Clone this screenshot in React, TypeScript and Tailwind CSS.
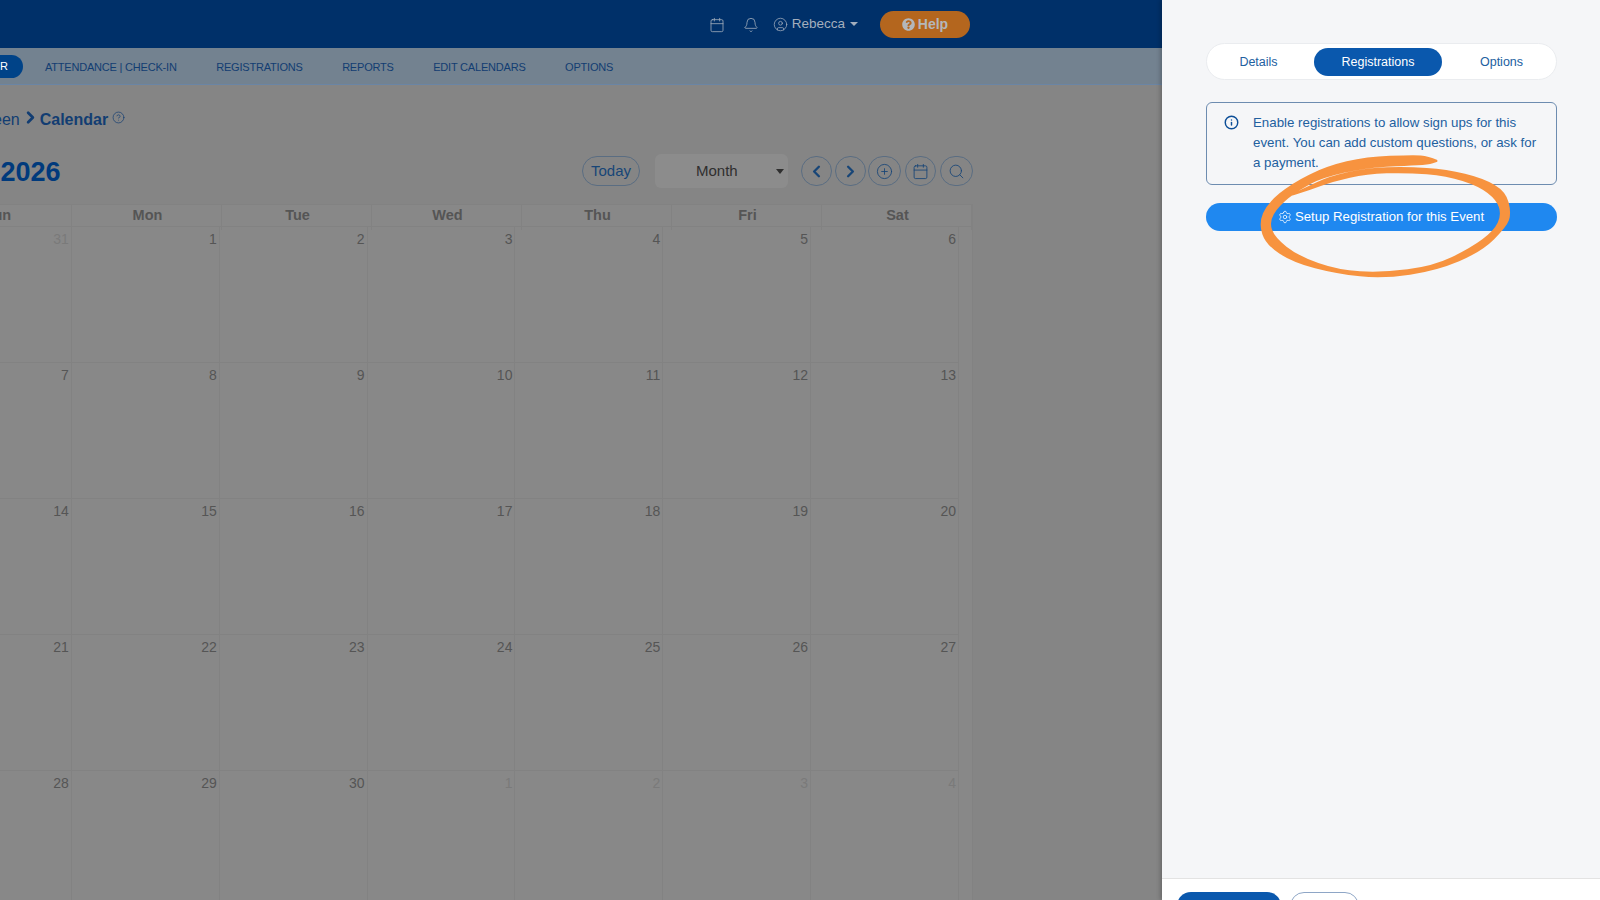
import React from "react";
import { Bell, Calendar, ChevronLeft, ChevronRight, CircleHelp, CirclePlus, CircleUser, Info, Search, Settings } from "lucide-react";
import { FaQuestionCircle } from "react-icons/fa";

const days = [
  [31, 1, 2, 3, 4, 5, 6],
  [7, 8, 9, 10, 11, 12, 13],
  [14, 15, 16, 17, 18, 19, 20],
  [21, 22, 23, 24, 25, 26, 27],
  [28, 29, 30, 1, 2, 3, 4],
];
const weekdays = ["Sun", "Mon", "Tue", "Wed", "Thu", "Fri", "Sat"];
const navItems = ["ATTENDANCE | CHECK-IN", "REGISTRATIONS", "REPORTS", "EDIT CALENDARS", "OPTIONS"];

// hand drawn ring, traced from the screenshot (units are 1/3 px)
const ring: number[][] = [
  [772, 420], [745, 408], [700, 405], [560, 410], [440, 438], [335, 490], [262, 550], [236, 610], [258, 675], [340, 728], [470, 762],
  [610, 776], [770, 752], [905, 695], [980, 620], [994, 580], [978, 515], [910, 475], [800, 448], [680, 440], [560, 444],
  [450, 468], [370, 505], [310, 535], [385, 512], [460, 484], [560, 462], [680, 458], [800, 468], [895, 498], [950, 540],
  [964, 585], [942, 632], [872, 684], [760, 738], [605, 758], [475, 750], [355, 708], [284, 652], [268, 605], [295, 560],
  [355, 510], [430, 472], [560, 443], [680, 437], [745, 434], [772, 425],
];

function smooth(pts: number[][]) {
  let d = `M${pts[0][0]} ${pts[0][1]}`;
  for (let i = 1; i < pts.length - 1; i++) {
    const mx = (pts[i][0] + pts[i + 1][0]) / 2;
    const my = (pts[i][1] + pts[i + 1][1]) / 2;
    d += `Q${pts[i][0]} ${pts[i][1]} ${mx} ${my}`;
  }
  return d + `L${pts[pts.length - 1][0]} ${pts[pts.length - 1][1]}Z`;
}

function RoundButton({ children, className }: { children: React.ReactNode; className: string }) {
  return (
    <div className={`h-[30px] rounded-full border border-[#5a6d82] flex items-center justify-center text-[#174577] ${className}`}>
      {children}
    </div>
  );
}

export default function App() {
  return (
    <div className="relative flex h-[900px] w-[1600px] overflow-hidden bg-[#858585] font-['Liberation_Sans',Arial,sans-serif]">
      <div className="w-[1162px] shrink-0 overflow-hidden">
        <div className="h-12 bg-[#003069] flex items-center justify-end pr-[192px] text-[#a3aebd]">
          <Calendar size={16} strokeWidth={1.2} className="mt-[1px]" />
          <Bell size={16} strokeWidth={1.2} className="ml-[18px] mt-[1px]" />
          <CircleUser size={15} strokeWidth={1.2} className="ml-[14px] mt-[1px]" />
          <span className="ml-[4px] pt-[1px] text-[13.5px]">Rebecca</span>
          <span className="ml-[5px] h-0 w-0 border-x-[4px] border-t-[4px] border-x-transparent border-t-[#a3aebd]"></span>
          <div className="ml-[22px] h-[27px] w-[90px] rounded-full bg-[#b4661e] flex items-center justify-center gap-[3px] text-[14px] font-bold text-[#b4b7ba]">
            <FaQuestionCircle size={13} />
            Help
          </div>
        </div>

        <div className="h-[37px] bg-[#738290] border-b border-[#6a85a5] flex items-center pt-[2px] text-[11px] tracking-[-0.2px] text-[#123d72]">
          <div className="w-[23px] h-[23px] -mt-[2px] rounded-r-full bg-[#004388] text-white flex items-center text-[11px]">R</div>
          <div className="ml-[22px] flex gap-[39.5px]">
            {navItems.map((item) => (
              <span key={item}>{item}</span>
            ))}
          </div>
        </div>

        <div className="ml-[-78px] w-[1051px]">
          <div className="pt-[23px] pl-[47px] h-[68px] flex items-start text-[16px] text-[#123d72]">
            <span>Screen</span>
            <ChevronRight size={19} strokeWidth={3.4} className="ml-[1px]" />
            <span className="font-bold">Calendar</span>
            <CircleHelp size={13} strokeWidth={1.3} className="ml-[4px] mt-[3px]" />
          </div>

          <div className="flex items-center h-[36px] mb-[15px]">
            <span className="pl-[8px] pt-[2px] text-[27px] font-bold text-[#003a7c] leading-none">June 2026</span>
            <div className="ml-auto flex items-center">
              <RoundButton className="w-[58px] text-[15px]">Today</RoundButton>
              <div className="ml-[15px] h-[34px] w-[133px] rounded-md bg-[#8c8c8c] flex items-center text-[15px] text-[#2f2f2f]">
                <span className="ml-[41px]">Month</span>
                <span className="ml-[38px] h-0 w-0 border-x-[4px] border-t-[5px] border-x-transparent border-t-[#2f2f2f]"></span>
              </div>
              <RoundButton className="ml-[13px] w-[31px]"><ChevronLeft size={19} strokeWidth={3} /></RoundButton>
              <RoundButton className="ml-[3px] w-[31px]"><ChevronRight size={19} strokeWidth={3} /></RoundButton>
              <RoundButton className="ml-[2px] w-[33px] text-[#33465c]"><CirclePlus size={17} strokeWidth={1.2} /></RoundButton>
              <RoundButton className="ml-[4px] w-[31px] text-[#33465c]"><Calendar size={17} strokeWidth={1.2} /></RoundButton>
              <RoundButton className="ml-[4px] w-[33px] text-[#33465c]"><Search size={17} strokeWidth={1.2} /></RoundButton>
            </div>
          </div>

          <div className="grid grid-cols-7 h-[23px] border-y border-[#828282] bg-[#888888] border-r">
            {weekdays.map((d) => (
              <div key={d} className="border-r border-[#828282] flex items-center justify-center pb-[3px] pl-[2px] text-[14.5px] font-bold text-[#555555]">
                {d}
              </div>
            ))}
          </div>

          <div className="ml-[2px] w-[1049px] pr-[13px] bg-[#888888] border-r border-[#828282]">
            {days.map((row, r) => (
              <div key={r} className="grid grid-cols-7 h-[136px] border-b border-[#828282]">
                {row.map((n, i) => {
                  const other = (r === 0 && i === 0) || (r === 4 && i > 2);
                  return (
                    <div key={i} className={`border-r border-[#828282] pt-[4px] pr-[2px] text-right text-[14px] leading-[16px] ${other ? "text-[#7a7a7a]" : "text-[#555555]"}`}>
                      {n}
                    </div>
                  );
                })}
              </div>
            ))}
          </div>
        </div>
      </div>

      <div className="flex-1 flex flex-col bg-[#f5f6f8] shadow-[-2px_0_4px_rgba(0,0,0,0.2)]">
        <div className="flex-1 pl-[44px] pr-[43px] pt-[43px]">
          <div className="h-[37px] rounded-full bg-white border border-[#eaecef] flex items-center pt-[2px] text-[12.5px] text-[#22609f]">
            <div className="w-[107px] pr-[4px] text-center">Details</div>
            <div className="w-[128px] h-[28px] -mt-[2px] rounded-full bg-[#0a58ad] text-white flex items-center justify-center pt-[1px]">Registrations</div>
            <div className="flex-1 pl-[5px] text-center">Options</div>
          </div>

          <div className="mt-[22px] h-[83px] rounded-md border border-[#6d8cb0] flex text-[13.3px] leading-[20px] text-[#22609f] pt-[10px] pl-[17px] pr-[16px]">
            <Info size={15} strokeWidth={2.3} className="shrink-0 mt-[2px] text-[#0d4f98]" />
            <div className="ml-[14px]">Enable registrations to allow sign ups for this event. You can add custom questions, or ask for a payment.</div>
          </div>

          <div className="mt-[18px] h-[28px] rounded-full bg-[#1f88f0] flex items-center justify-center gap-[3px] pr-[1px] text-[13.2px] text-white">
            <Settings size={14} strokeWidth={1.3} />
            Setup Registration for this Event
          </div>
        </div>

        <div className="h-[22px] overflow-hidden border-t border-[#e3e3e3] bg-white pt-[13px] pl-[15px] flex gap-[9px]">
          <div className="w-[104px] h-10 rounded-[14px] bg-[#0a58ad]"></div>
          <div className="w-[69px] h-10 rounded-[14px] border border-[#8ea6c6] bg-white"></div>
        </div>
      </div>

      <svg viewBox="0 0 1260 810" className="absolute left-[1180px] top-[20px] w-[420px] h-[270px] pointer-events-none">
        <path d={smooth(ring)} fill="#f7933f" />
      </svg>
    </div>
  );
}
